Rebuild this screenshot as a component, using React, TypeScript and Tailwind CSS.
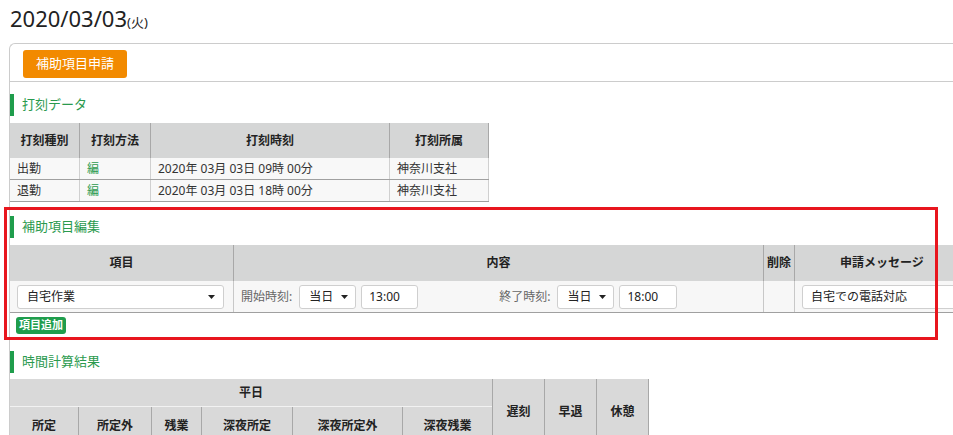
import React from 'react';

const FONT = "font-['Noto_Sans','Noto_Sans_CJK_JP',sans-serif]";

function Caret() {
  return (
    <svg width="7" height="4" viewBox="0 0 7 4">
      <path d="M0 0h7L3.5 4z" fill="#222" />
    </svg>
  );
}

function SectionTitle({ children, className = '' }: { children: React.ReactNode; className?: string }) {
  return (
    <div className={`flex h-[22px] items-center ${className}`}>
      <span className="h-full w-[4px] bg-[#1f9d4c]" />
      <span className="ml-[8px] text-[13px] text-[#2b9a4e]">{children}</span>
    </div>
  );
}

function Select({ value, className }: { value: string; className: string }) {
  return (
    <div
      className={`flex h-[24px] items-center justify-between rounded-[3px] border border-[#cfcfcf] bg-white text-[12px] text-[#222] ${className}`}
    >
      <span>{value}</span>
      <Caret />
    </div>
  );
}

function Input({ value, className }: { value: string; className: string }) {
  return (
    <div
      className={`flex h-[24px] items-center rounded-[3px] border border-[#cfcfcf] bg-white text-[12px] text-[#222] ${className}`}
    >
      {value}
    </div>
  );
}

const stampCols = ['w-[70px]', 'w-[71px]', 'w-[239px]', 'w-[99px]'];
const stampHead = ['打刻種別', '打刻方法', '打刻時刻', '打刻所属'];
const stampRows = [
  ['出勤', '編', '2020年 03月 03日 09時 00分', '神奈川支社'],
  ['退勤', '編', '2020年 03月 03日 18時 00分', '神奈川支社'],
];

const subCols = [
  { w: 'w-[69px]', t: '所定' },
  { w: 'w-[73px]', t: '所定外' },
  { w: 'w-[50px]', t: '残業' },
  { w: 'w-[91px]', t: '深夜所定' },
  { w: 'w-[110px]', t: '深夜所定外' },
  { w: 'flex-1', t: '深夜残業' },
];

export default function App() {
  return (
    <div className={`relative h-[435px] w-[953px] overflow-hidden bg-white text-[#333] ${FONT}`}>
      <h1 className="h-[28px] overflow-visible pl-[10px] pt-0 text-[22px] leading-[28px] text-[#222] mt-[4px]">
        2020/03/03<span className="text-[13px] leading-none">(火)</span>
      </h1>

      <div className="ml-[9px] mt-[11px] w-[1000px] rounded-tl-[6px] border-l border-t border-[#cccccc]">
        <div className="h-[38px] border-b border-[#cccccc] pl-[13px] pt-[6px]">
          <button className="h-[28px] w-[104px] rounded-[3px] bg-[#f28a00] text-[13px] text-white">
            補助項目申請
          </button>
        </div>

        <SectionTitle className="mt-[12px]">打刻データ</SectionTitle>
        <div className="mt-[7px] w-[479px] text-[12px]">
          <div className="flex h-[35px] bg-[#d5d6d6] font-bold text-[#222]">
            {stampHead.map((h, i) => (
              <div key={h} className={`${stampCols[i]} flex items-center justify-center border-r border-[#a8a8a8]`}>
                {h}
              </div>
            ))}
          </div>
          {stampRows.map((row, r) => (
            <div key={r} className="flex h-[22px] border-b border-[#a0a0a0] bg-[#f8f8f8]">
              {row.map((c, i) => (
                <div
                  key={i}
                  className={`${stampCols[i]} flex items-center border-r border-[#d0d0d0] pl-[7px] ${
                    i === 1 ? 'text-[#2b9a4e]' : 'text-[#333]'
                  } ${i === 3 ? 'border-[#a8a8a8]' : ''}`}
                >
                  {c}
                </div>
              ))}
            </div>
          ))}
        </div>

        <SectionTitle className="mt-[14px]">補助項目編集</SectionTitle>
        <div className="mt-[7px] w-[959px] text-[12px]">
          <div className="flex h-[36px] bg-[#d5d6d6] font-bold text-[#222]">
            <div className="flex w-[224px] items-center justify-center border-r border-[#a8a8a8]">項目</div>
            <div className="flex w-[530px] items-center justify-center border-r border-[#a8a8a8]">内容</div>
            <div className="flex w-[31px] items-center justify-center border-r border-[#a8a8a8]">削除</div>
            <div className="flex w-[174px] items-center justify-center">申請メッセージ</div>
          </div>
          <div className="flex h-[32px] border-b border-[#a0a0a0] bg-[#f7f7f7]">
            <div className="flex w-[224px] items-center border-r border-[#c8c8c8] pl-[7px]">
              <Select value="自宅作業" className="w-[207px] pl-[9px] pr-[8px]" />
            </div>
            <div className="flex w-[530px] items-center border-r border-[#c8c8c8] pl-[7px] text-[#666]">
              <span>開始時刻:</span>
              <Select value="当日" className="ml-[7px] w-[57px] pl-[9px] pr-[7px]" />
              <Input value="13:00" className="ml-[5px] w-[57px] pl-[7px]" />
              <span className="ml-[81px]">終了時刻:</span>
              <Select value="当日" className="ml-[7px] w-[57px] pl-[9px] pr-[7px]" />
              <Input value="18:00" className="ml-[5px] w-[58px] pl-[7px]" />
            </div>
            <div className="w-[31px] border-r border-[#c8c8c8]" />
            <div className="flex w-[174px] items-center pl-[7px]">
              <Input value="自宅での電話対応" className="w-[165px] pl-[8px]" />
            </div>
          </div>
        </div>
        <button className="ml-[6px] mt-[4px] flex h-[17px] w-[50px] items-center justify-center rounded-[3px] bg-[#1f9d4c] text-[11px] font-bold text-white">
          項目追加
        </button>

        <SectionTitle className="mt-[17px]">時間計算結果</SectionTitle>
        <div className="mt-[6px] flex w-[639px] bg-[#d9d9d9] text-[12px] font-bold text-[#222]">
          <div className="w-[483px] border-r border-[#a8a8a8]">
            <div className="flex h-[28px] items-center justify-center border-b border-[#f2f2f2]">平日</div>
            <div className="flex h-[38px]">
              {subCols.map((c, i) => (
                <div
                  key={c.t}
                  className={`${c.w} flex items-center justify-center ${
                    i < subCols.length - 1 ? 'border-r border-[#a8a8a8]' : ''
                  }`}
                >
                  {c.t}
                </div>
              ))}
            </div>
          </div>
          {['遅刻', '早退', '休憩'].map((t) => (
            <div key={t} className="flex w-[52px] items-center justify-center border-r border-[#a8a8a8]">
              {t}
            </div>
          ))}
        </div>
      </div>

      <div className="pointer-events-none absolute left-[4px] top-[207px] h-[133px] w-[934px] border-[3px] border-[#e8161e]" />
    </div>
  );
}
